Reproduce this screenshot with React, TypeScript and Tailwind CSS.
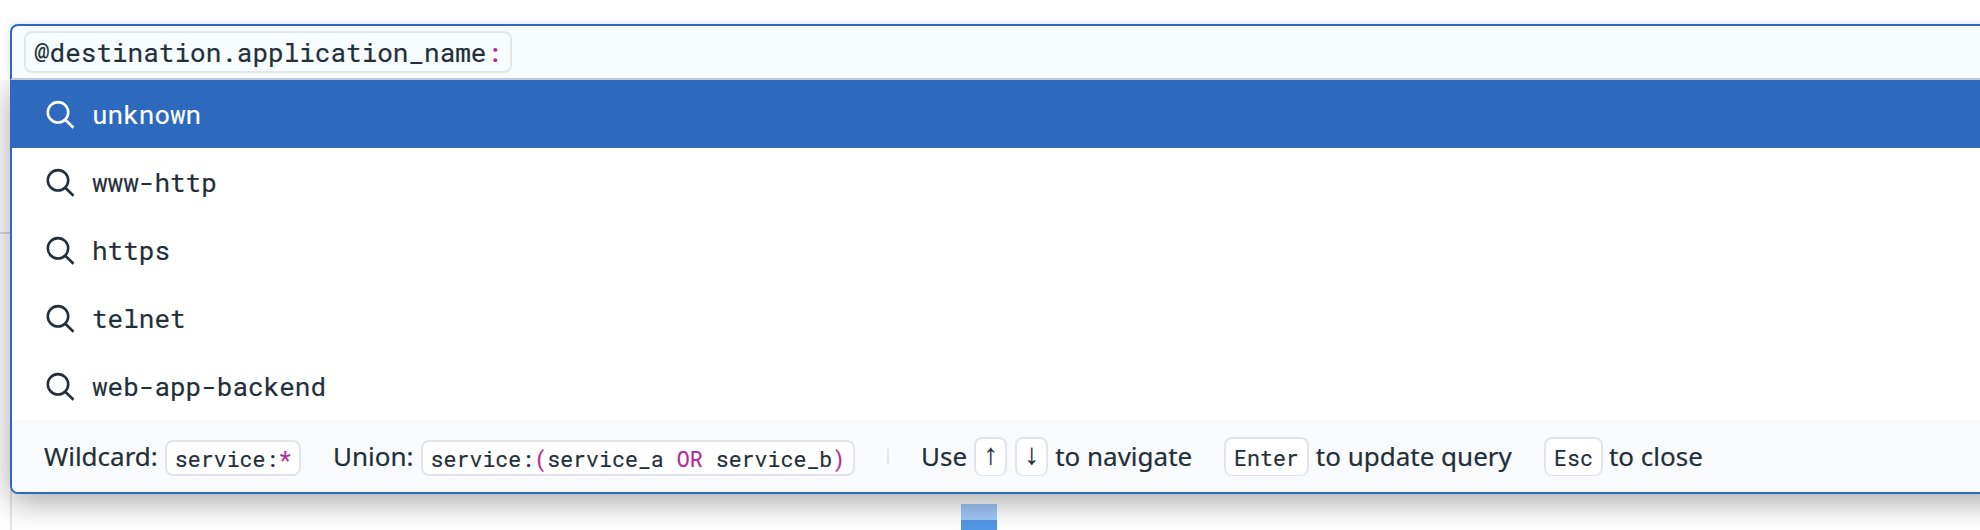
import React from "react";

const MONO = "font-['Roboto_Mono','Liberation_Mono',monospace]";

function SearchIcon() {
  return (
    <svg className="h-8 w-8 shrink-0" viewBox="0 0 32 32" fill="none" stroke="currentColor" strokeWidth="2.6">
      <circle cx="14" cy="14.3" r="10.2" />
      <path d="M21 21.5 29.5 29.7" />
    </svg>
  );
}

function Code({ children }: { children: React.ReactNode }) {
  return (
    <span className="mt-[3px] flex h-9 items-center rounded-[8px] border-2 border-[#e2e3ec] bg-white px-2 font-['Roboto_Mono','Liberation_Mono',monospace] text-[21.6px] whitespace-pre">
      {children}
    </span>
  );
}

function Key({ children }: { children: React.ReactNode }) {
  return (
    <kbd className="flex h-[39px] items-center rounded-[8px] border-2 border-b-[1px] border-[#e2e3ec] bg-white px-2 font-['Roboto_Mono','Liberation_Mono',monospace] text-[21.6px]">
      {children}
    </kbd>
  );
}

function Arrow({ children }: { children: React.ReactNode }) {
  return (
    <Key>
      <span className="flex w-[13px] justify-center pb-[2px] font-['Liberation_Mono',monospace] text-[29px]">{children}</span>
    </Key>
  );
}

function Op({ children }: { children: React.ReactNode }) {
  return <span className="text-[#b5279b]">{children}</span>;
}

const options = ["unknown", "www-http", "https", "telnet", "web-app-backend"];

export default function App() {
  return (
    <div className="relative h-[530px] w-[1980px] overflow-hidden bg-white pt-6 pl-[10px] text-[#232f38] [-webkit-text-stroke:0.2px]">
      <div className="absolute top-[232px] left-0 h-[2px] w-[10px] bg-[#d9d9e6]" />
      <div className="absolute top-[490px] left-[10px] h-10 w-[2px] bg-[#e2e3ec]" />
      <div className="absolute top-[504px] left-[961px] h-[26px] w-9 bg-[#a0c8f8]">
        <div className="h-4" />
        <div className="h-[10px] bg-[#5298e8]" />
      </div>

      <div className="relative z-10 flex h-14 w-[2000px] items-start rounded-t-[8px] border-2 border-[#2d69bd] border-b-[#c3c7de] bg-[#f7fcff] pt-[5px] pl-3 shadow-[0_0_8px_rgba(45,105,189,0.2)] [clip-path:inset(-12px_-12px_0_-12px)]">
        <div className={"flex h-[42px] items-center rounded-[8px] border-2 border-[#e1e5ec] px-2 text-[26px] " + MONO}>
          @destination.application_name<Op>:</Op>
        </div>
      </div>

      <div className="relative h-[414px] w-[2000px] rounded-b-[8px] border-2 border-t-0 border-[#2d69bd] bg-white shadow-[0_8px_32px_rgba(0,0,0,0.35)] [clip-path:inset(0_-60px_-60px_-60px)]">
        <ul>
          {options.map((name, i) => (
            <li
              key={name}
              className={
                i === 0
                  ? "flex h-[68px] items-center gap-4 bg-[#2d69bd] pl-8 text-white"
                  : "flex h-[68px] items-center gap-4 pl-8"
              }
            >
              <SearchIcon />
              <span className={"text-[26px] " + MONO}>{name}</span>
            </li>
          ))}
        </ul>
        <div className="flex h-[72px] items-start rounded-b-[6px] bg-[#f9fafc] pt-[17px] pl-8 font-['Noto_Sans',sans-serif] text-[26px] leading-[39px]">
          <div className="flex w-[289px] gap-[7px]">
            Wildcard:
            <Code>
              service:<Op>*</Op>
            </Code>
          </div>
          <div className="flex w-[554px] gap-[7px]">
            Union:
            <Code>
              service:<Op>(</Op>service_a <Op>OR</Op> service_b<Op>)</Op>
            </Code>
          </div>
          <div className="mt-3 h-4 w-[2px] bg-[#e2e3ec]" />
          <div className="ml-8 flex w-[303px] gap-[7px]">
            Use
            <div className="flex gap-2">
              <Arrow>↑</Arrow>
              <Arrow>↓</Arrow>
            </div>
            to navigate
          </div>
          <div className="flex w-[320px] gap-[7px]">
            <Key>Enter</Key>
            to update query
          </div>
          <div className="flex gap-[6px]">
            <Key>Esc</Key>
            to close
          </div>
        </div>
      </div>
    </div>
  );
}
